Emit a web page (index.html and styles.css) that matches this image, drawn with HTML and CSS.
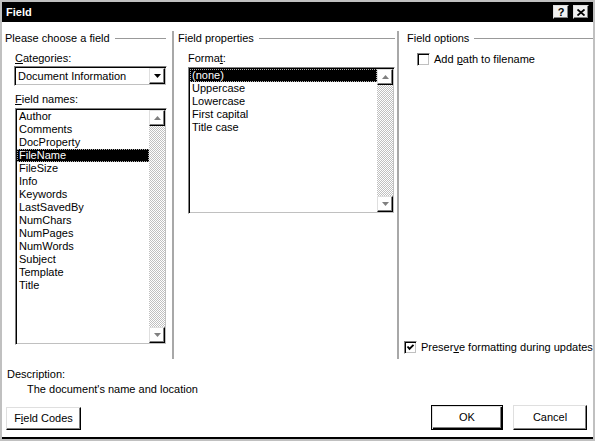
FILE: index.html
```html
<!DOCTYPE html>
<html>
<head>
<meta charset="utf-8">
<title>Field</title>
<link rel="stylesheet" href="styles.css">
</head>
<body>
<div class="window">
  <div class="titlebar">
    <span class="title">Field</span>
    <div class="tb-btns">
      <span class="tb-btn tb-help">?</span>
      <span class="tb-btn"><svg width="8" height="7" viewBox="0 0 8 7"><path d="M0.5 0.5 L7.5 6.5 M7.5 0.5 L0.5 6.5" stroke="#000" stroke-width="1.8" fill="none"/></svg></span>
    </div>
  </div>
  <div class="client">
    <div class="columns">
      <section class="col col1">
        <div class="group-title">Please choose a field</div>
        <div class="label lbl-cat"><u>C</u>ategories:</div>
        <div class="combo">
          <span class="combo-text">Document Information</span>
          <span class="combo-btn"><svg width="7" height="4" viewBox="0 0 7 4"><path d="M0 0 H7 L3.5 4 Z" fill="#000"/></svg></span>
        </div>
        <div class="label lbl-names"><u>F</u>ield names:</div>
        <div class="listbox list-names">
          <div class="items">
            <div class="item">Author</div>
            <div class="item">Comments</div>
            <div class="item">DocProperty</div>
            <div class="item sel">FileName</div>
            <div class="item">FileSize</div>
            <div class="item">Info</div>
            <div class="item">Keywords</div>
            <div class="item">LastSavedBy</div>
            <div class="item">NumChars</div>
            <div class="item">NumPages</div>
            <div class="item">NumWords</div>
            <div class="item">Subject</div>
            <div class="item">Template</div>
            <div class="item">Title</div>
          </div>
          <div class="sb">
            <span class="sb-btn"><svg width="7" height="4" viewBox="0 0 7 4"><path d="M0 4 H7 L3.5 0 Z" fill="#808080"/></svg></span>
            <span class="sb-track"></span>
            <span class="sb-btn"><svg width="7" height="4" viewBox="0 0 7 4"><path d="M0 0 H7 L3.5 4 Z" fill="#808080"/></svg></span>
          </div>
        </div>
      </section>
      <section class="col col2">
        <div class="group-title">Field properties</div>
        <div class="label lbl-format">Forma<u>t</u>:</div>
        <div class="listbox list-format">
          <div class="items">
            <div class="item sel">(none)</div>
            <div class="item">Uppercase</div>
            <div class="item">Lowercase</div>
            <div class="item">First capital</div>
            <div class="item">Title case</div>
          </div>
          <div class="sb">
            <span class="sb-btn"><svg width="7" height="4" viewBox="0 0 7 4"><path d="M0 4 H7 L3.5 0 Z" fill="#808080"/></svg></span>
            <span class="sb-track"></span>
            <span class="sb-btn"><svg width="7" height="4" viewBox="0 0 7 4"><path d="M0 0 H7 L3.5 4 Z" fill="#808080"/></svg></span>
          </div>
        </div>
      </section>
      <section class="col col3">
        <div class="group-title">Field options</div>
        <label class="check check-path"><span class="box"></span><span>Add <u>p</u>ath to filename</span></label>
        <div class="spacer"></div>
        <label class="check check-preserve"><span class="box"><svg width="9" height="9" viewBox="0 0 9 9"><path d="M1.5 3.5 L3.5 5.8 L7.5 1.8" stroke="#000" stroke-width="1.9" fill="none"/></svg></span><span>Preser<u>v</u>e formatting during updates</span></label>
      </section>
    </div>
    <div class="desc-label">Description:</div>
    <div class="desc-text">The document's name and location</div>
    <div class="footer">
      <span class="btn btn-codes">F<u>i</u>eld Codes</span>
      <span class="footer-space"></span>
      <span class="btn btn-default btn-ok">OK</span>
      <span class="btn btn-cancel">Cancel</span>
    </div>
  </div>
</div>
</body>
</html>
```
FILE: styles.css
```css
* { box-sizing: border-box; }
html, body { margin: 0; padding: 0; }
body {
  width: 595px;
  height: 441px;
  overflow: hidden;
  background: #c0c0c0;
  font-family: "Liberation Sans", Arial, sans-serif;
  font-size: 11px;
  line-height: 13px;
  color: #000;
}
u { text-decoration: underline; text-underline-offset: 1px; }

.window {
  width: 595px;
  height: 441px;
  padding: 2px;
  display: flex;
  flex-direction: column;
  background: #c0c0c0;
}

.titlebar {
  height: 20px;
  flex-shrink: 0;
  background: #000;
  color: #fff;
  display: flex;
  align-items: center;
  padding: 0 4px 0 4px;
}
.title { flex: 1; font-weight: bold; font-size: 11px; }
.tb-btns { display: flex; gap: 4px; }
.tb-btn {
  width: 16px;
  height: 14px;
  background: #f0f0f0;
  border: 1px solid;
  border-color: #dfdfdf #000 #000 #dfdfdf;
  box-shadow: inset -1px -1px #808080;
  display: flex;
  align-items: center;
  justify-content: center;
  color: #000;
}
.tb-help { font-weight: bold; font-size: 11px; line-height: 12px; }

.client {
  flex: 1;
  background: #fff;
  border-bottom: 2px solid #000;
  display: flex;
  flex-direction: column;
  padding-top: 9px;
}

.columns { display: flex; height: 328px; flex-shrink: 0; }
.col { display: flex; flex-direction: column; }
.col1 { width: 170px; padding: 0 6px 0 3px; }
.col2 { width: 225px; border-left: 2px solid #a8a8a8; padding: 0 2px 0 4px; }
.col3 { flex: 1; border-left: 2px solid #a8a8a8; padding: 0 1px 0 8px; }

.group-title {
  display: flex;
  align-items: center;
  height: 13px;
  margin-top: 1px;
  white-space: nowrap;
}
.group-title::after {
  content: "";
  flex: 1;
  height: 1px;
  background: #999;
  margin-left: 5px;
}

.label { height: 13px; white-space: nowrap; }
.lbl-cat { margin: 7px 0 0 10px; }
.lbl-names { margin: 7px 0 0 10px; }
.lbl-format { margin: 7px 0 0 10px; }

.combo {
  width: 153px;
  height: 20px;
  margin: 1px 0 0 9px;
  flex-shrink: 0;
  border: 1px solid;
  border-color: #808080 #fff #fff #808080;
  box-shadow: inset 1px 1px #000, inset -1px -1px #c0c0c0;
  padding: 1px;
  display: flex;
  align-items: stretch;
}
.combo-text { flex: 1; padding-left: 2px; display: flex; align-items: center; white-space: nowrap; }

.combo-btn, .sb-btn {
  width: 16px;
  height: 16px;
  flex-shrink: 0;
  background: #fff;
  border: 1px solid;
  border-color: #dfdfdf #000 #000 #dfdfdf;
  box-shadow: inset -1px -1px #808080;
  display: flex;
  align-items: center;
  justify-content: center;
}

.listbox {
  flex-shrink: 0;
  border: 1px solid;
  border-color: #808080 #fff #fff #808080;
  box-shadow: inset 1px 1px #000, inset -1px -1px #c0c0c0;
  padding: 1px;
  display: flex;
}
.list-names { width: 152px; height: 237px; margin: 2px 0 0 10px; }
.list-format { width: 207px; height: 147px; margin: 2px 0 0 10px; }

.items { flex: 1; overflow: hidden; }
.item { height: 13px; line-height: 13px; padding-left: 2px; white-space: nowrap; }
.item.sel {
  background: #000;
  color: #fff;
  outline: 1px dotted #b0b0b0;
  outline-offset: -1px;
}

.sb { width: 16px; display: flex; flex-direction: column; }
.sb-track {
  flex: 1;
  background: repeating-conic-gradient(#c0c0c0 0 25%, #fff 0 50%) 0 0 / 2px 2px;
}

.check { display: flex; align-items: center; gap: 4px; height: 13px; white-space: nowrap; }
.check-path { margin: 8px 0 0 10px; }
.check-preserve { margin: 0 0 5px -3px; }
.spacer { flex: 1; }
.box {
  width: 13px;
  height: 13px;
  flex-shrink: 0;
  background: #fff;
  border: 1px solid;
  border-color: #808080 #fff #fff #808080;
  box-shadow: inset 1px 1px #000, inset -1px -1px #c0c0c0;
  display: flex;
  align-items: center;
  justify-content: center;
}

.desc-label { margin: 9px 0 0 5px; height: 13px; }
.desc-text { margin: 2px 0 0 25px; height: 13px; }

.footer {
  display: flex;
  align-items: flex-start;
  margin-top: 9px;
  padding: 0 6px 0 4px;
}
.footer-space { flex: 1; }
.btn {
  background: #fff;
  border: 1px solid;
  border-color: #dfdfdf #000 #000 #dfdfdf;
  box-shadow: inset -1px -1px #808080;
  display: flex;
  align-items: center;
  justify-content: center;
  white-space: nowrap;
}
.btn-codes { width: 75px; height: 23px; margin-top: 2px; }
.btn-ok { width: 72px; height: 25px; margin-right: 10px; }
.btn-cancel { width: 74px; height: 25px; }
.btn-default {
  border-color: #000;
  box-shadow: inset 1px 1px #dfdfdf, inset -1px -1px #000, inset -2px -2px #808080;
}
```
